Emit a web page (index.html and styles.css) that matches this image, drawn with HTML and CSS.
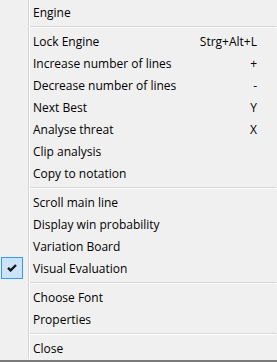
FILE: index.html
```html
<!DOCTYPE html>
<html lang="en">
<head>
  <meta charset="UTF-8">
  <title>Engine context menu</title>
  <link rel="stylesheet" href="styles.css">
</head>
<body>
  <div class="menu">
    <ul class="items">
      <li class="item"><span class="label">Engine</span></li>
      <li class="sep"></li>
      <li class="item"><span class="label">Lock Engine</span><span class="key">Strg+Alt+L</span></li>
      <li class="item"><span class="label">Increase number of lines</span><span class="key">+</span></li>
      <li class="item"><span class="label">Decrease number of lines</span><span class="key">-</span></li>
      <li class="item"><span class="label">Next Best</span><span class="key">Y</span></li>
      <li class="item"><span class="label">Analyse threat</span><span class="key">X</span></li>
      <li class="item"><span class="label">Clip analysis</span></li>
      <li class="item"><span class="label">Copy to notation</span></li>
      <li class="sep"></li>
      <li class="item"><span class="label">Scroll main line</span></li>
      <li class="item"><span class="label">Display win probability</span></li>
      <li class="item"><span class="label">Variation Board</span></li>
      <li class="item checked">
        <span class="check">
          <svg width="10" height="8" viewBox="0 0 10 8"><path d="M1 3.8 L3.6 6.4 L9 1" fill="none" stroke="#1a1a1a" stroke-width="2.4"/></svg>
        </span>
        <span class="label">Visual Evaluation</span>
      </li>
      <li class="sep"></li>
      <li class="item"><span class="label">Choose Font</span></li>
      <li class="item"><span class="label">Properties</span></li>
      <li class="sep"></li>
      <li class="item"><span class="label">Close</span></li>
    </ul>
  </div>
  <div class="edge"></div>
</body>
</html>
```

FILE: styles.css
```css
body {
  margin: 0;
  background: #f0f0f0;
  font-family: "Segoe UI", "Open Sans", "Noto Sans", sans-serif;
  font-size: 12px;
  color: #000;
  width: 277px;
  height: 362px;
  overflow: hidden;
}
.menu {
  height: 359px;
  box-sizing: border-box;
  background: linear-gradient(to right, transparent 28px, #d7d7d7 28px, #d7d7d7 29px, #fff 29px, #fff 30px, transparent 30px);
}
.items {
  list-style: none;
  margin: 0;
  padding: 0;
  padding-top: 1px;
}
.item {
  position: relative;
  display: flex;
  align-items: center;
  height: 22px;
  padding: 0 20px 0 33px;
}
.label {
  flex: 1;
  white-space: nowrap;
}
.key {
  white-space: nowrap;
}
.sep {
  height: 7px;
  margin-left: 30px;
  margin-right: 1px;
  background: linear-gradient(to bottom, transparent 3px, #d7d7d7 3px, #d7d7d7 4px, #fff 4px, #fff 5px, transparent 5px);
}
.check {
  position: absolute;
  left: 1px;
  top: 0;
  width: 22px;
  height: 22px;
  box-sizing: border-box;
  border: 1px solid #3399ff;
  background: #cce4f7;
  display: flex;
  align-items: center;
  justify-content: center;
}
.edge {
  margin-top: 1px;
  height: 2px;
  background: #7a7a7a;
}
```
